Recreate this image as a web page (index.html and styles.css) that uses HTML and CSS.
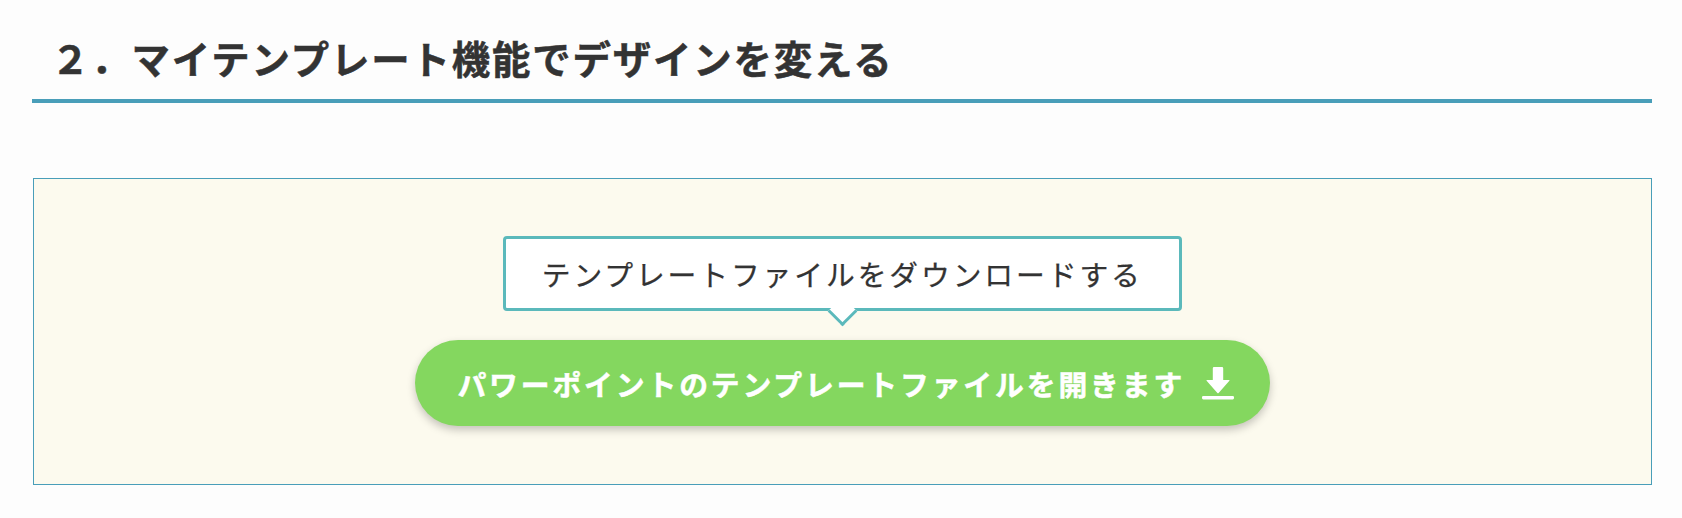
FILE: index.html
```
<!DOCTYPE html>
<html lang="ja">
<head>
  <meta charset="UTF-8">
  <title>マイテンプレート機能でデザインを変える</title>
  <meta name="viewport" content="width=device-width, initial-scale=1.0">
  <link rel="stylesheet" href="styles.css">
</head>
<body>
<section class="section">
  <h2 class="section-title">２．マイテンプレート機能でデザインを変える</h2>
  <div class="download-box">
    <p class="balloon">テンプレートファイルをダウンロードする</p>
    <a class="download-btn" href="#">
      <span>パワーポイントのテンプレートファイルを開きます</span>
      <svg class="download-icon" width="32" height="33" viewBox="0 0 32 33" fill="currentColor" aria-hidden="true">
        <path d="M12 0h8q1.200 0 1.200 1.200V13h5.800q1 0 .4.700L16.600 26q-.6.600-1.200 0L4.600 13.700q-.6-.7.400-.7h5.800V1.200Q10.800 0 12 0z"/>
        <rect x="0" y="29" width="32" height="3.400" rx="1.300"/>
      </svg>
    </a>
  </div>
</section>
</body>
</html>
```
FILE: styles.css
```
body {
  margin: 0;
  font-family: "Noto Sans CJK JP", sans-serif;
  background: #fdfdfd;
  color: #333;
}
.section {
  padding: 31px 30px 33px 32px;
}
.section-title {
  margin: 0 0 75px;
  padding: 0 19px 15px;
  border-bottom: 4px solid #499eb9;
  font-size: 38.4px;
  line-height: 53px;
  letter-spacing: 1.87px;
  -webkit-text-stroke: 0.5px;
}
.download-box {
  display: flex;
  flex-direction: column;
  align-items: center;
  box-sizing: border-box;
  height: 307px;
  margin-left: 1px;
  padding-top: 57px;
  background: #fcfaee;
  border: 1px solid #499eb9;
}
.balloon {
  position: relative;
  margin: 0 0 29px;
  padding: 14px 36px 13px 35.5px;
  background: #fff;
  border: 3px solid #5bb9bb;
  border-radius: 4px;
  font-size: 28.8px;
  line-height: 42px;
  letter-spacing: 0.1em;
  -webkit-text-stroke: 0.25px;
}
/* balloon tail */
.balloon::after {
  content: "";
  position: absolute;
  left: 50%;
  bottom: -14px;
  width: 18px;
  height: 18px;
  margin-left: -11px;
  background: #fff;
  border: solid #5bb9bb;
  border-width: 0 3px 3px 0;
  transform: rotate(45deg);
}
.download-btn {
  display: flex;
  align-items: center;
  gap: 16.5px;
  box-sizing: border-box;
  height: 86px;
  padding: 0 36px 0 42px;
  background: #84d75f;
  border-radius: 43px;
  box-shadow: 0 4px 8px rgba(0, 0, 0, 0.22);
  color: #fff;
  font-size: 28.8px;
  font-weight: bold;
  letter-spacing: 0.1em;
  text-decoration: none;
  -webkit-text-stroke: 0.5px;
}
.download-icon {
  margin-top: 1px;
}
```
